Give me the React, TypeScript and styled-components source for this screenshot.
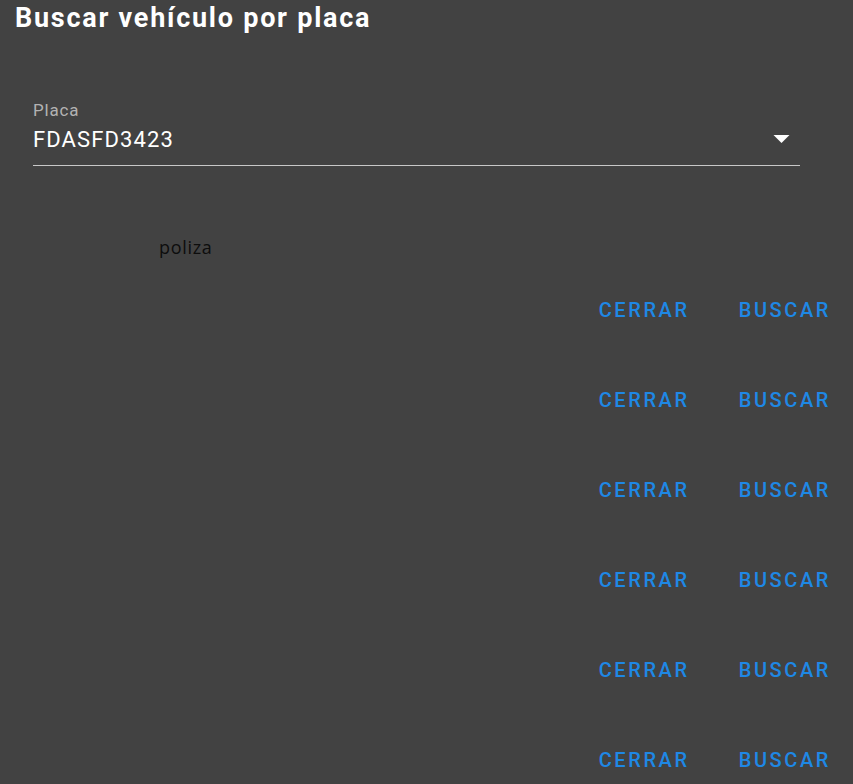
import styled, { createGlobalStyle } from "styled-components";

const GlobalStyle = createGlobalStyle`
  html, body {
    margin: 0;
    padding: 0;
    background: #424242;
  }
  body {
    font-family: Roboto, "Liberation Sans", sans-serif;
  }
`;

const Root = styled.div`
  display: flex;
  flex-direction: column;
  min-height: 784px;
  background: #424242;
  overflow: hidden;
`;

const Title = styled.h2`
  margin: 0;
  padding: 1px 0 0 15px;
  font-size: 27px;
  line-height: 34px;
  font-weight: 700;
  letter-spacing: 1.75px;
  color: #ffffff;
`;

const Field = styled.div`
  display: flex;
  flex-direction: column;
  margin: 65px 53px 0 33px;
`;

const Label = styled.label`
  font-size: 17px;
  line-height: 20px;
  letter-spacing: 0.8px;
  color: #b3b3b3;
`;

const SelectRow = styled.div`
  display: flex;
  align-items: center;
  justify-content: space-between;
  margin-top: 6px;
  padding-bottom: 11px;
  border-bottom: 1px solid #c8c8c8;
`;

const Value = styled.span`
  font-size: 22px;
  line-height: 28px;
  letter-spacing: 1.1px;
  color: #ffffff;
`;

const Arrow = styled.svg`
  width: 17px;
  height: 8px;
  margin-right: 10px;
  margin-top: -2px;
  fill: #ffffff;
`;

const Poliza = styled.div`
  margin: 69px 0 0 159px;
  font-family: "Open Sans", "Noto Sans", sans-serif;
  font-size: 18px;
  line-height: 24px;
  letter-spacing: 0.7px;
  color: #0d0d0d;
`;

const Actions = styled.div`
  display: flex;
  justify-content: flex-end;
  gap: 49px;
  padding: 33px 22px 33px 0;
`;

const TextButton = styled.button`
  border: 0;
  padding: 0;
  background: transparent;
  font-family: Roboto, "Liberation Sans", sans-serif;
  font-size: 20px;
  line-height: 24px;
  font-weight: 500;
  letter-spacing: 2.6px;
  color: #1e88e5;
  text-transform: uppercase;
  cursor: pointer;
`;

const ActionList = styled.div`
  display: flex;
  flex-direction: column;
  margin-top: 6px;
`;

const rows = [0, 1, 2, 3, 4, 5];

export default function App() {
  return (
    <Root>
      <GlobalStyle />
      <Title>Buscar vehículo por placa</Title>
      <Field>
        <Label>Placa</Label>
        <SelectRow>
          <Value>FDASFD3423</Value>
          <Arrow viewBox="0 0 10 5">
            <path d="M0 0l5 5 5-5z" />
          </Arrow>
        </SelectRow>
      </Field>
      <Poliza>poliza</Poliza>
      <ActionList>
        {rows.map((r) => (
          <Actions key={r}>
            <TextButton>Cerrar</TextButton>
            <TextButton>Buscar</TextButton>
          </Actions>
        ))}
      </ActionList>
    </Root>
  );
}
